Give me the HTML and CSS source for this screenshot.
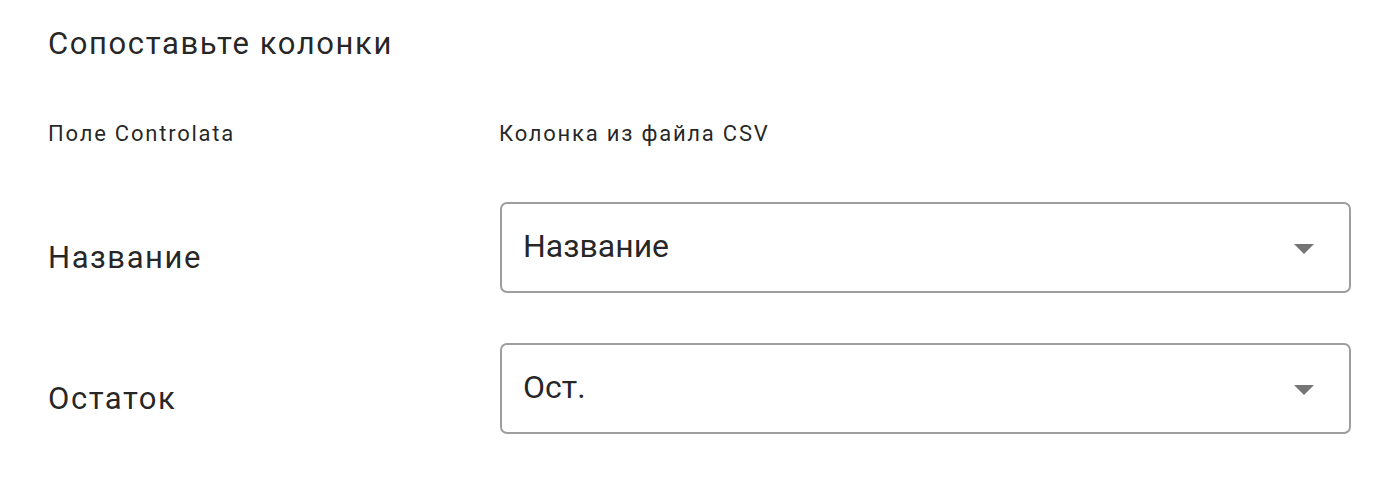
FILE: index.html
```html
<!DOCTYPE html>
<html>

<head>
  <title>Сопоставьте колонки</title>
  <meta name="viewport" content="initial-scale=1.0">
  <link rel="stylesheet" href="styles.css">
</head>

<body>
  <div class="page">
    <h2 class="title">Сопоставьте колонки</h2>

    <div class="mapping-head">
      <span>Поле Controlata</span>
      <span>Колонка из файла CSV</span>
    </div>

    <div class="mapping-row">
      <label class="field-label" for="col_name">Название</label>
      <div class="select" id="col_name">
        <span class="select-value">Название</span>
        <span class="select-arrow"></span>
      </div>
    </div>

    <div class="mapping-row">
      <label class="field-label" for="col_rest">Остаток</label>
      <div class="select" id="col_rest">
        <span class="select-value">Ост.</span>
        <span class="select-arrow"></span>
      </div>
    </div>
  </div>
</body>

</html>
```

FILE: styles.css
```css
body {
  margin: 0;
  background-color: #fff;
  font-family: Roboto, "Liberation Sans", Arial, sans-serif;
  color: rgba(0, 0, 0, 0.87);
}

.page {
  padding: 20px 49px 0 48px;
}

.title {
  margin: 0;
  font-size: 31px;
  font-weight: 400;
  line-height: 48px;
  letter-spacing: 1.6px;
}

.mapping-head {
  display: grid;
  grid-template-columns: 451px 1fr;
  margin-top: 50px;
  font-size: 22px;
  line-height: 32px;
  letter-spacing: 1.78px;
}

.mapping-row {
  display: grid;
  grid-template-columns: 452px 1fr;
  align-items: center;
  margin-top: 50px;
}

.mapping-head + .mapping-row {
  margin-top: 52px;
}

.field-label {
  margin-top: 21px;
  font-size: 31px;
  line-height: 40px;
  letter-spacing: 1.55px;
}

.select {
  display: flex;
  align-items: center;
  justify-content: space-between;
  box-sizing: border-box;
  height: 91px;
  padding: 0 35px 0 21px;
  border: 2px solid #9e9e9e;
  border-radius: 7px;
}

.select-value {
  font-size: 32px;
  line-height: 40px;
  margin-top: -3px;
}

.select-arrow {
  width: 0;
  height: 0;
  border-left: 10px solid transparent;
  border-right: 10px solid transparent;
  border-top: 10px solid #757575;
  margin-top: 2px;
}
```
